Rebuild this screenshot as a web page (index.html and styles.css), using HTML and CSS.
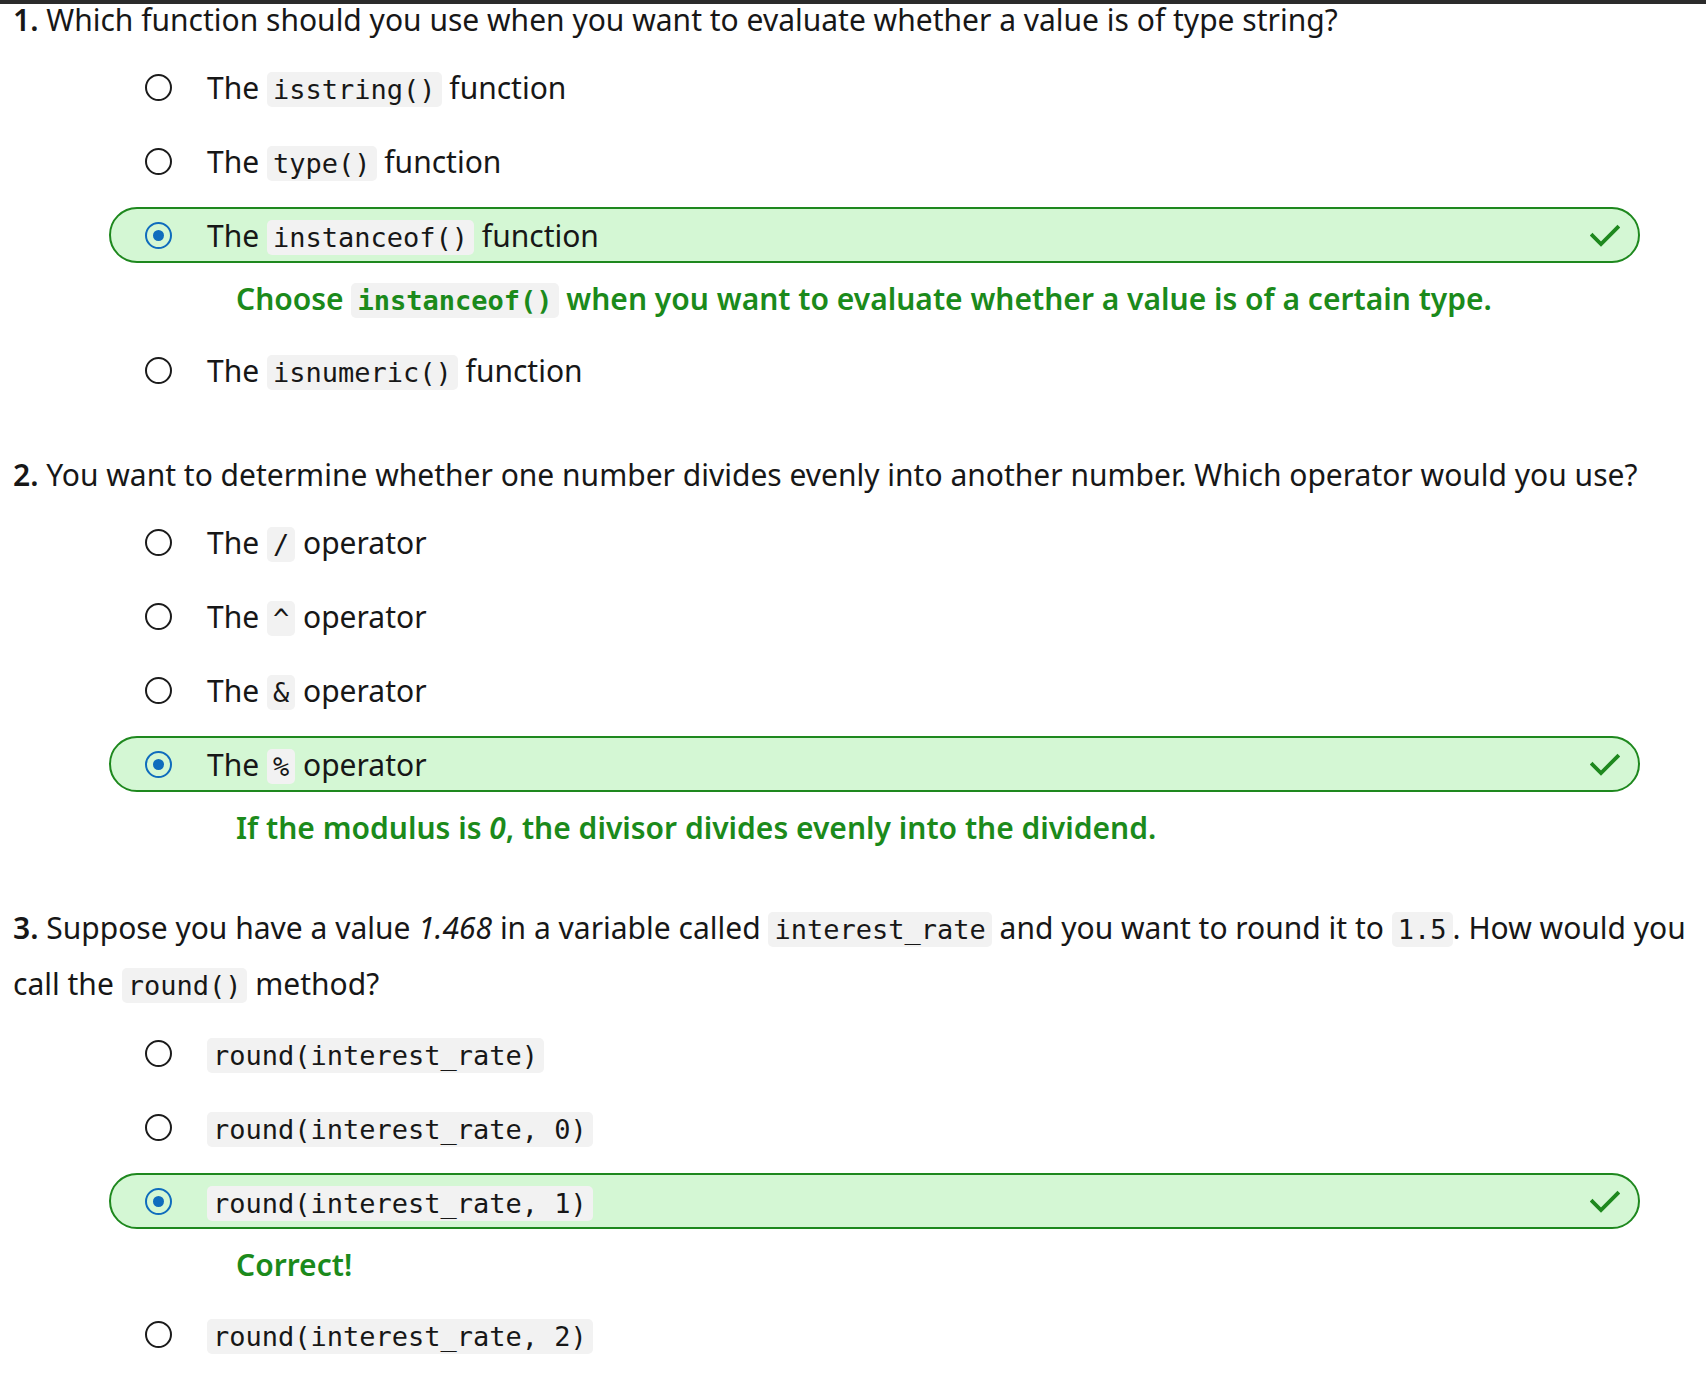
FILE: index.html
```html
<!DOCTYPE html>
<html lang="en">
<head>
<meta charset="utf-8">
<title>Knowledge check</title>
<link rel="stylesheet" href="styles.css">
</head>
<body>
<div class="topbar"></div>
<main class="quiz">
  <section class="question first">
    <p class="q-text"><strong>1.</strong> Which function should you use when you want to evaluate whether a value is of type string?</p>
    <div class="choices">
      <div class="choice"><div class="row"><span class="radio"></span><span class="label">The <code>isstring()</code> function</span></div></div>
      <div class="choice"><div class="row"><span class="radio"></span><span class="label">The <code>type()</code> function</span></div></div>
      <div class="choice correct">
        <div class="row"><span class="radio checked"></span><span class="label">The <code>instanceof()</code> function</span>
          <svg class="check" viewBox="0 0 30 23" width="30" height="23"><path d="M2.5 11.5 L11 20 L27.5 3.5" fill="none" stroke="#1e881e" stroke-width="3.8" stroke-linecap="square"/></svg>
        </div>
        <p class="explain">Choose <code>instanceof()</code> when you want to evaluate whether a value is of a certain type.</p>
      </div>
      <div class="choice"><div class="row"><span class="radio"></span><span class="label">The <code>isnumeric()</code> function</span></div></div>
    </div>
  </section>

  <section class="question">
    <p class="q-text"><strong>2.</strong> You want to determine whether one number divides evenly into another number. Which operator would you use?</p>
    <div class="choices">
      <div class="choice"><div class="row"><span class="radio"></span><span class="label">The <code>/</code> operator</span></div></div>
      <div class="choice"><div class="row"><span class="radio"></span><span class="label">The <code>^</code> operator</span></div></div>
      <div class="choice"><div class="row"><span class="radio"></span><span class="label">The <code>&amp;</code> operator</span></div></div>
      <div class="choice correct">
        <div class="row"><span class="radio checked"></span><span class="label">The <code>%</code> operator</span>
          <svg class="check" viewBox="0 0 30 23" width="30" height="23"><path d="M2.5 11.5 L11 20 L27.5 3.5" fill="none" stroke="#1e881e" stroke-width="3.8" stroke-linecap="square"/></svg>
        </div>
        <p class="explain">If the modulus is <em>0</em>, the divisor divides evenly into the dividend.</p>
      </div>
    </div>
  </section>

  <section class="question">
    <p class="q-text"><strong>3.</strong> <span>Suppose you have a value</span> <em>1.468</em> <span>in a variable called</span> <code>interest_rate</code> <span>and you want to round it to</span> <code>1.5</code><span>. How would you</span> <span>call the</span> <code>round()</code> <span>method?</span></p>
    <div class="choices">
      <div class="choice"><div class="row"><span class="radio"></span><span class="label"><code>round(interest_rate)</code></span></div></div>
      <div class="choice"><div class="row"><span class="radio"></span><span class="label"><code>round(interest_rate, 0)</code></span></div></div>
      <div class="choice correct">
        <div class="row"><span class="radio checked"></span><span class="label"><code>round(interest_rate, 1)</code></span>
          <svg class="check" viewBox="0 0 30 23" width="30" height="23"><path d="M2.5 11.5 L11 20 L27.5 3.5" fill="none" stroke="#1e881e" stroke-width="3.8" stroke-linecap="square"/></svg>
        </div>
        <p class="explain">Correct!</p>
      </div>
      <div class="choice"><div class="row"><span class="radio"></span><span class="label"><code>round(interest_rate, 2)</code></span></div></div>
    </div>
  </section>
</main>
</body>
</html>
```
FILE: styles.css
```css
html, body {
  margin: 0;
  padding: 0;
  background: #ffffff;
}
body {
  font-family: "Noto Sans", "Open Sans", sans-serif;
  font-size: 30px;
  color: #171717;
  overflow-x: hidden;
}
.topbar {
  position: fixed;
  top: 0;
  left: 0;
  right: 0;
  height: 4px;
  background: #2b2b2b;
  z-index: 5;
}
.quiz {
  padding: 0 0 0 13px;
}
.question {
  margin-top: 50px;
}
.question.first {
  margin-top: -7px;
}
.q-text {
  margin: 0;
  line-height: 54px;
}
.q-text strong {
  font-weight: 600;
}
code {
  font-family: "DejaVu Sans Mono", "Liberation Mono", monospace;
  font-size: 27px;
  background: #f2f2f2;
  border-radius: 5px;
  padding: 2px 6px;
}
.choices {
  margin: 12px 66px 0 96px;
  display: flex;
  flex-direction: column;
  gap: 18px;
}
.row {
  box-sizing: border-box;
  height: 56px;
  display: flex;
  align-items: center;
  padding: 0 18px 0 34px;
  border: 2px solid transparent;
  border-radius: 28px;
}
.radio {
  box-sizing: border-box;
  flex: none;
  width: 27px;
  height: 27px;
  border: 2px solid #1b1b1b;
  border-radius: 50%;
  margin-right: 35px;
  display: flex;
  align-items: center;
  justify-content: center;
}
.radio.checked {
  border-color: #0f6cbd;
}
.radio.checked::after {
  content: "";
  width: 11px;
  height: 11px;
  border-radius: 50%;
  background: #0f6cbd;
}
.label {
  flex: 1;
  white-space: nowrap;
}
.correct .row {
  background: #d4f7d4;
  border-color: #1e881e;
}
.check {
  flex: none;
  display: block;
}
.explain {
  margin: 0;
  padding: 15px 0 2px 127px;
  line-height: 42px;
  font-weight: 600;
  color: #1b8a1b;
}
.explain code {
  font-weight: 700;
  color: #1b8a1b;
}
```
